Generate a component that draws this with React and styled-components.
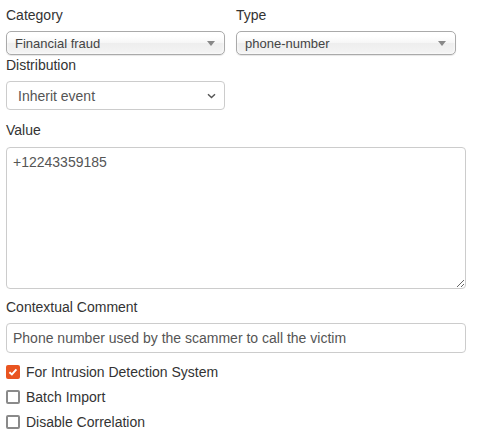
import React from 'react';
import styled, { createGlobalStyle } from 'styled-components';

const GlobalStyle = createGlobalStyle`
  body {
    margin: 0;
    background: #fff;
    font-family: "Liberation Sans", Arial, sans-serif;
    color: #333;
  }
`;

const Form = styled.div`
  width: 479px;
  padding: 5px 13px 0 6px;
  box-sizing: border-box;
  display: flex;
  flex-direction: column;
`;

const Row = styled.div`
  display: flex;
  gap: 11px;
`;

const Field = styled.div`
  display: flex;
  flex-direction: column;
  width: ${(p) => p.width || '100%'};
  margin-bottom: ${(p) => p.mb || 0}px;
`;

const Label = styled.label`
  font-size: 14px;
  line-height: 20px;
  color: #333;
  margin-bottom: ${(p) => p.gap || 6}px;
`;

const ChosenBox = styled.div`
  height: 24px;
  box-sizing: border-box;
  border: 1px solid #aaa;
  border-radius: 5px;
  background: linear-gradient(#fff 20%, #f6f6f6 50%, #eee 52%, #f4f4f4 100%);
  box-shadow: 0 0 3px #fff inset, 0 1px 1px rgba(0, 0, 0, 0.1);
  display: flex;
  align-items: center;
  justify-content: space-between;
  padding: 0 9px 0 8px;
  font-size: 13px;
  color: #444;
`;

const Triangle = styled.span`
  width: 0;
  height: 0;
  border-left: 4px solid transparent;
  border-right: 4px solid transparent;
  border-top: 5px solid #888;
  margin-top: 1px;
`;

const SelectBox = styled.div`
  height: 29px;
  box-sizing: border-box;
  border: 1px solid #ccc;
  border-radius: 4px;
  background: #fff;
  display: flex;
  align-items: center;
  justify-content: space-between;
  padding: 0 8px 0 11px;
  font-size: 14px;
  color: #555;
`;

const TextArea = styled.textarea`
  height: 142px;
  box-sizing: border-box;
  border: 1px solid #ccc;
  border-radius: 4px;
  padding: 4px 6px;
  font-family: "Liberation Sans", Arial, sans-serif;
  font-size: 14px;
  line-height: 20px;
  color: #555;
  resize: both;
  outline: none;
`;

const TextInput = styled.input`
  height: 30px;
  box-sizing: border-box;
  border: 1px solid #ccc;
  border-radius: 4px;
  padding: 0 6px;
  font-family: "Liberation Sans", Arial, sans-serif;
  font-size: 14px;
  color: #555;
  outline: none;
`;

const CheckList = styled.div`
  display: flex;
  flex-direction: column;
  margin-top: 6px;
`;

const CheckRow = styled.div`
  display: flex;
  align-items: center;
  height: 25px;
  gap: 6px;
  font-size: 14px;
  color: #333;
`;

const Box = styled.span`
  width: 14px;
  height: 14px;
  box-sizing: border-box;
  border-radius: 2px;
  border: ${(p) => (p.checked ? 'none' : '2px solid #8a8a8a')};
  background: ${(p) => (p.checked ? '#e95420' : '#fff')};
  display: flex;
  align-items: center;
  justify-content: center;
`;

const Checkbox = ({ checked, label }) => (
  <CheckRow>
    <Box checked={checked}>
      {checked && (
        <svg width="10" height="8" viewBox="0 0 10 8">
          <path d="M1.4 4.2 L3.9 6.5 L8.4 1.4" fill="none" stroke="#fff" strokeWidth="1.9" />
        </svg>
      )}
    </Box>
    {label}
  </CheckRow>
);

const App = () => (
  <>
    <GlobalStyle />
    <Form>
      <Row>
        <Field width="219px">
          <Label gap={6}>Category</Label>
          <ChosenBox>
            Financial fraud
            <Triangle />
          </ChosenBox>
        </Field>
        <Field width="220px">
          <Label gap={6}>Type</Label>
          <ChosenBox>
            phone-number
            <Triangle />
          </ChosenBox>
        </Field>
      </Row>
      <Field width="219px" mb={10}>
        <Label gap={6}>Distribution</Label>
        <SelectBox>
          Inherit event
          <svg width="9" height="6" viewBox="0 0 9 6">
            <path d="M1 1.2 L4.5 4.6 L8 1.2" fill="none" stroke="#555" strokeWidth="1.4" />
          </svg>
        </SelectBox>
      </Field>
      <Field mb={8}>
        <Label gap={7}>Value</Label>
        <TextArea defaultValue="+12243359185" />
      </Field>
      <Field>
        <Label gap={6}>Contextual Comment</Label>
        <TextInput readOnly value="Phone number used by the scammer to call the victim" />
      </Field>
      <CheckList>
        <Checkbox checked label="For Intrusion Detection System" />
        <Checkbox label="Batch Import" />
        <Checkbox label="Disable Correlation" />
      </CheckList>
    </Form>
  </>
);

export default App;
